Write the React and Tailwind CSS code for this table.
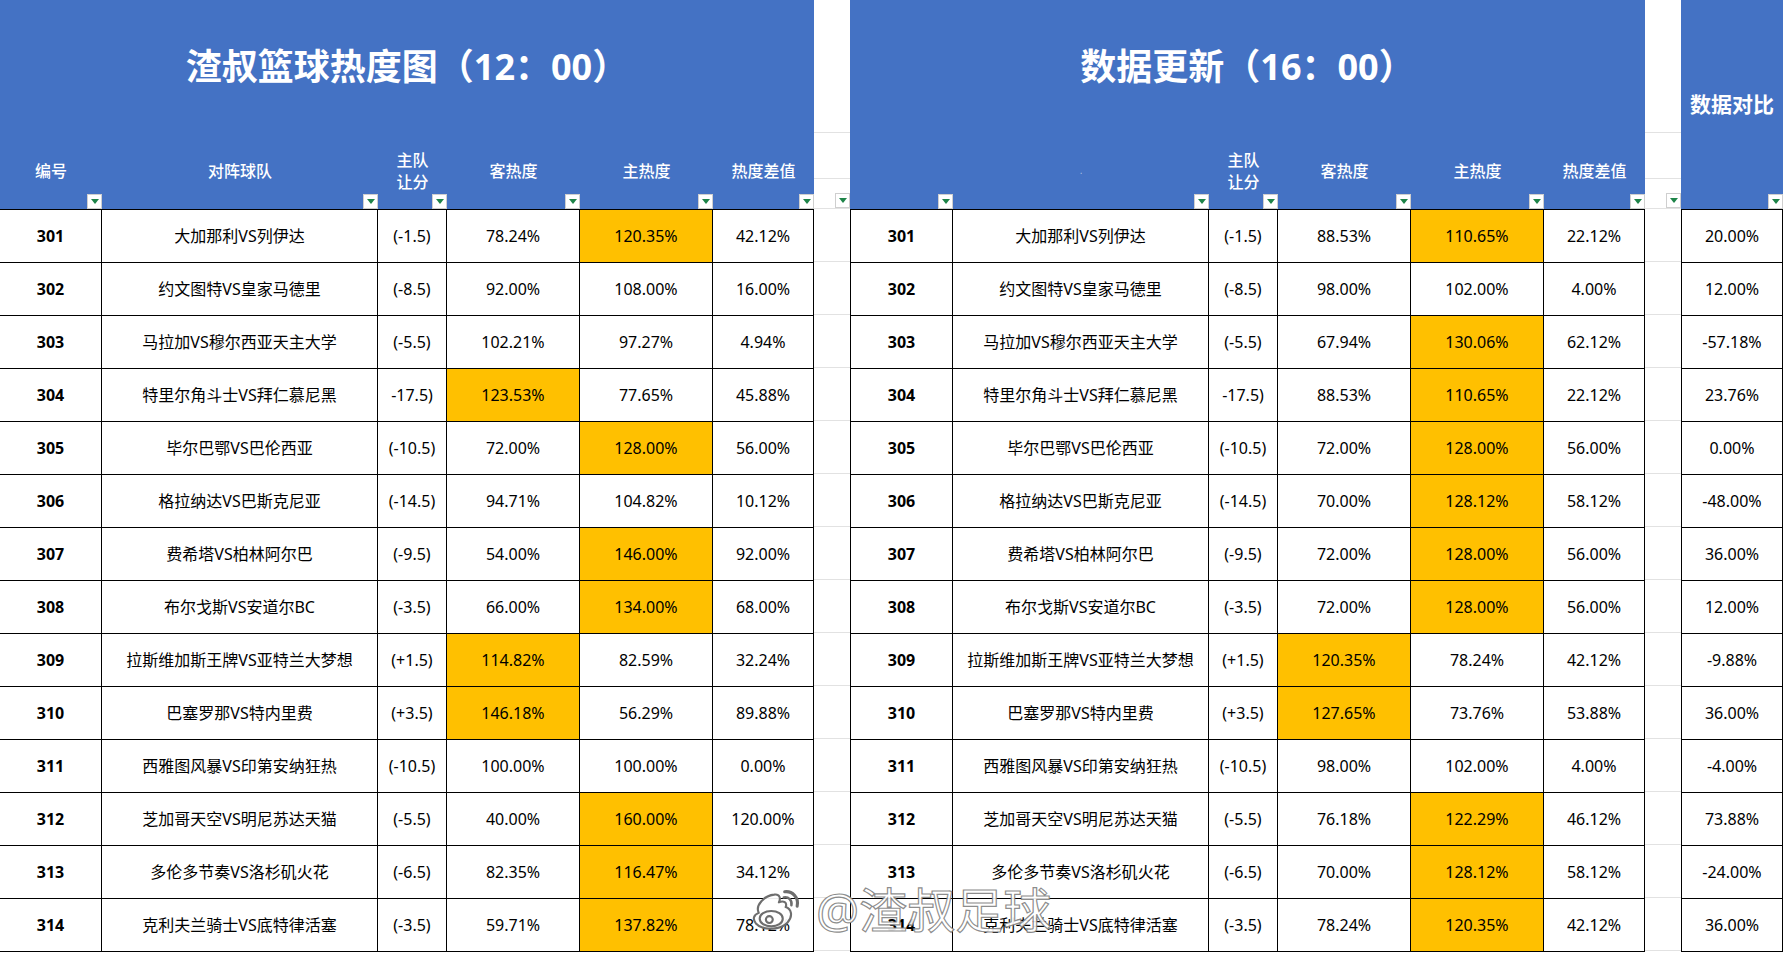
import React from 'react';

const first = [
  ['301', '大加那利VS列伊达', '(-1.5)', '78.24%', '120.35%', '42.12%', 'h'],
  ['302', '约文图特VS皇家马德里', '(-8.5)', '92.00%', '108.00%', '16.00%', ''],
  ['303', '马拉加VS穆尔西亚天主大学', '(-5.5)', '102.21%', '97.27%', '4.94%', ''],
  ['304', '特里尔角斗士VS拜仁慕尼黑', '-17.5)', '123.53%', '77.65%', '45.88%', 'a'],
  ['305', '毕尔巴鄂VS巴伦西亚', '(-10.5)', '72.00%', '128.00%', '56.00%', 'h'],
  ['306', '格拉纳达VS巴斯克尼亚', '(-14.5)', '94.71%', '104.82%', '10.12%', ''],
  ['307', '费希塔VS柏林阿尔巴', '(-9.5)', '54.00%', '146.00%', '92.00%', 'h'],
  ['308', '布尔戈斯VS安道尔BC', '(-3.5)', '66.00%', '134.00%', '68.00%', 'h'],
  ['309', '拉斯维加斯王牌VS亚特兰大梦想', '(+1.5)', '114.82%', '82.59%', '32.24%', 'a'],
  ['310', '巴塞罗那VS特内里费', '(+3.5)', '146.18%', '56.29%', '89.88%', 'a'],
  ['311', '西雅图风暴VS印第安纳狂热', '(-10.5)', '100.00%', '100.00%', '0.00%', ''],
  ['312', '芝加哥天空VS明尼苏达天猫', '(-5.5)', '40.00%', '160.00%', '120.00%', 'h'],
  ['313', '多伦多节奏VS洛杉矶火花', '(-6.5)', '82.35%', '116.47%', '34.12%', 'h'],
  ['314', '克利夫兰骑士VS底特律活塞', '(-3.5)', '59.71%', '137.82%', '78.12%', 'h'],
];

const second = [
  ['301', '大加那利VS列伊达', '(-1.5)', '88.53%', '110.65%', '22.12%', 'h'],
  ['302', '约文图特VS皇家马德里', '(-8.5)', '98.00%', '102.00%', '4.00%', ''],
  ['303', '马拉加VS穆尔西亚天主大学', '(-5.5)', '67.94%', '130.06%', '62.12%', 'h'],
  ['304', '特里尔角斗士VS拜仁慕尼黑', '-17.5)', '88.53%', '110.65%', '22.12%', 'h'],
  ['305', '毕尔巴鄂VS巴伦西亚', '(-10.5)', '72.00%', '128.00%', '56.00%', 'h'],
  ['306', '格拉纳达VS巴斯克尼亚', '(-14.5)', '70.00%', '128.12%', '58.12%', 'h'],
  ['307', '费希塔VS柏林阿尔巴', '(-9.5)', '72.00%', '128.00%', '56.00%', 'h'],
  ['308', '布尔戈斯VS安道尔BC', '(-3.5)', '72.00%', '128.00%', '56.00%', 'h'],
  ['309', '拉斯维加斯王牌VS亚特兰大梦想', '(+1.5)', '120.35%', '78.24%', '42.12%', 'a'],
  ['310', '巴塞罗那VS特内里费', '(+3.5)', '127.65%', '73.76%', '53.88%', 'a'],
  ['311', '西雅图风暴VS印第安纳狂热', '(-10.5)', '98.00%', '102.00%', '4.00%', ''],
  ['312', '芝加哥天空VS明尼苏达天猫', '(-5.5)', '76.18%', '122.29%', '46.12%', 'h'],
  ['313', '多伦多节奏VS洛杉矶火花', '(-6.5)', '70.00%', '128.12%', '58.12%', 'h'],
  ['314', '克利夫兰骑士VS底特律活塞', '(-3.5)', '78.24%', '120.35%', '42.12%', 'h'],
];

const compare = ['20.00%', '12.00%', '-57.18%', '23.76%', '0.00%', '-48.00%', '36.00%', '12.00%', '-9.88%', '36.00%', '-4.00%', '73.88%', '-24.00%', '36.00%'];

const FilterBtn = () => (
  <span className="absolute right-0 bottom-0 flex h-[15px] w-[15px] items-center justify-center border border-[#cfcfcf] bg-white">
    <svg width="8" height="5" viewBox="0 0 8 5">
      <path d="M0 0h8L4 5z" fill="#1e8449" />
    </svg>
  </span>
);

const HeadCell = ({ children }) => (
  <div className="relative flex items-center justify-center text-center text-base leading-[22px] font-medium text-white">
    {children}
    <FilterBtn />
  </div>
);

const Cell = ({ children, hl, bold }) => (
  <div
    className={
      'flex items-center justify-center border-r border-b border-black text-base text-black ' +
      (hl ? 'bg-[#FFC000] ' : 'bg-white ') +
      (bold ? 'font-bold' : '')
    }
  >
    {children}
  </div>
);

const HeatTable = ({ title, rows, cols, bodyClass, blank }) => (
  <div className="flex flex-col">
    <div className="flex h-[209px] flex-col bg-[#4472C4]">
      <div className="flex h-[133px] items-center justify-center text-[36px] font-bold text-white">{title}</div>
      <div className={'grid h-[76px] ' + cols + ' ' + (blank ? 'ml-px' : '')}>
        <HeadCell>{blank ? '' : '编号'}</HeadCell>
        <HeadCell>{blank ? <span className="text-[8px] text-white/60">.</span> : '对阵球队'}</HeadCell>
        <HeadCell>
          主队
          <br />
          让分
        </HeadCell>
        <HeadCell>客热度</HeadCell>
        <HeadCell>主热度</HeadCell>
        <HeadCell>热度差值</HeadCell>
      </div>
    </div>
    <div className={'border-t border-black ' + bodyClass}>
      {rows.map((r) => (
        <div key={r[0]} className={'grid h-[53px] ' + cols}>
          <Cell bold>{r[0]}</Cell>
          <Cell>{r[1]}</Cell>
          <Cell>{r[2]}</Cell>
          <Cell hl={r[6] === 'a'}>{r[3]}</Cell>
          <Cell hl={r[6] === 'h'}>{r[4]}</Cell>
          <Cell>{r[5]}</Cell>
        </div>
      ))}
    </div>
  </div>
);

const Gap = () => (
  <div className="flex w-[36px] flex-col bg-white">
    <div className="h-[133px] border-b border-[#e2e2e2]" />
    <div className="h-[46px] border-b border-[#e2e2e2]" />
    <div className="relative h-[30px] border-b border-[#e2e2e2]">
      <FilterBtn />
    </div>
    {compare.map((_, i) => (
      <div key={i} className="h-[53px] border-b border-[#e2e2e2]" />
    ))}
  </div>
);

const WeiboLogo = () => (
  <svg width="54" height="48" viewBox="0 0 56 50">
    <g fill="#ffffff" fillOpacity="0.92" stroke="#6e6e6e" strokeWidth="2.2" strokeLinejoin="round" strokeLinecap="round">
      <path d="M9 28 C5 20 15 10 25 9 C31 8 32 13 30 17 C35 15 39 17 37 22 C43 24 45 31 39 38 C32 46 13 47 6 39 C2 34 4 30 9 28 Z" />
      <ellipse cx="22" cy="34" rx="12" ry="8" />
      <circle cx="20" cy="35" r="3.6" />
      <path d="M36 6 C44 5 51 12 49 21" fill="none" strokeWidth="3.2" />
      <path d="M35 12 C40 11 44 15 43 20" fill="none" strokeWidth="2.6" />
    </g>
  </svg>
);

export default function App() {
  return (
    <div className="relative h-[953px] w-[1783px] overflow-hidden bg-white font-['Noto_Sans','Noto_Sans_CJK_SC',sans-serif]">
      <div className="flex">
        <div className="w-[814px]">
          <HeatTable
            title="渣叔篮球热度图（12：00）"
            rows={first}
            cols="grid-cols-[102px_276px_69px_133px_133px_101px]"
            bodyClass=""
          />
        </div>
        <Gap />
        <div className="w-[795px]">
          <HeatTable
            title="数据更新（16：00）"
            rows={second}
            cols="grid-cols-[102px_256px_69px_133px_133px_101px]"
            bodyClass="border-l"
            blank
          />
        </div>
        <Gap />
        <div className="flex w-[102px] flex-col">
          <div className="relative flex h-[209px] items-center justify-center bg-[#4472C4] text-[21px] font-bold text-white">
            数据对比
            <FilterBtn />
          </div>
          <div className="border-t border-l border-black">
            {compare.map((v, i) => (
              <div key={i} className="grid h-[53px] grid-cols-[101px]">
                <Cell>{v}</Cell>
              </div>
            ))}
          </div>
        </div>
      </div>
      <div className="absolute top-[886px] left-[750px] flex items-center gap-[12px]">
        <WeiboLogo />
        <span className="text-[48px] leading-none text-white/90 [-webkit-text-stroke:1.2px_rgba(120,120,120,0.85)]">
          @渣叔足球
        </span>
      </div>
    </div>
  );
}
